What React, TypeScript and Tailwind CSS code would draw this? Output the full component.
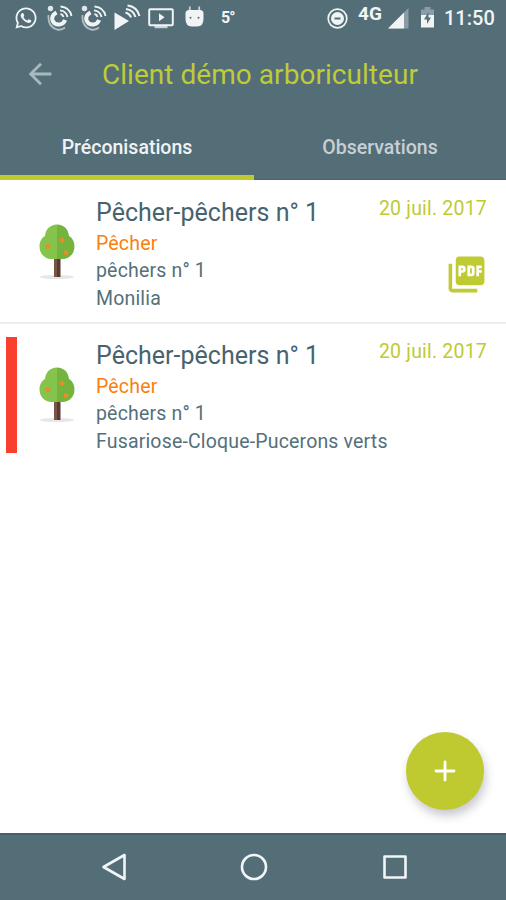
import React from 'react'
import { MdArrowBack, MdPictureAsPdf } from 'react-icons/md'
import { FaWhatsapp } from 'react-icons/fa'

type Item = {
  id: number
  name: string
  species: string
  plot: string
  issues: string
  date: string
  pdf: boolean
  alert: boolean
}

const ITEMS: Item[] = [
  { id: 1, name: 'Pêcher-pêchers n° 1', species: 'Pêcher', plot: 'pêchers n° 1', issues: 'Monilia', date: '20 juil. 2017', pdf: true, alert: false },
  { id: 2, name: 'Pêcher-pêchers n° 1', species: 'Pêcher', plot: 'pêchers n° 1', issues: 'Fusariose-Cloque-Pucerons verts', date: '20 juil. 2017', pdf: false, alert: true },
]

function DishIcon() {
  return (
    <svg width="27" height="27" viewBox="0 0 27 27" className="block">
      <circle cx="4.5" cy="4.5" r="2.7" fill="currentColor" opacity="0.9" />
      <path d="M10.5 8.5Q5 11.5 6.5 16.5Q8.5 21 13.5 20.5Q17.5 20 19.2 16" fill="none" stroke="currentColor" strokeWidth="4" />
      <path d="M2.5 11q-1 11.5 8.5 14.5 4.5 1 8-2" fill="none" stroke="currentColor" strokeWidth="1.8" opacity="0.6" />
      <g fill="none" stroke="currentColor" strokeWidth="1.8">
        <path d="M14.5 10q2.5.5 3 3" />
        <path d="M14 6.3q6.2.5 7.5 6.7" />
        <path d="M14.5 2.5q9.2.8 11 9.5" />
      </g>
    </svg>
  )
}

function CastIcon() {
  return (
    <svg width="27" height="27" viewBox="0 0 27 27" className="block">
      <path d="M.5 8.5l14.500 8.500L.5 26z" fill="currentColor" />
      <g fill="none" stroke="currentColor" strokeWidth="2">
        <path d="M11.5 8.5q4.5 1.5 5.5 5" />
        <path d="M12 5q7.5 1 9.5 8" />
        <path d="M13.5 1.5q9.5 1 12 10.5" />
      </g>
    </svg>
  )
}

function TvIcon() {
  return (
    <svg width="26" height="21" viewBox="0 0 26 21" className="block">
      <rect x="1.2" y="1.2" width="23.6" height="16" rx="1" fill="none" stroke="currentColor" strokeWidth="2" />
      <path d="M11 5.2l5.5 4-5.5 4z" fill="currentColor" />
      <path d="M6.5 17h13v3.2h-13z" fill="currentColor" opacity="0.75" />
    </svg>
  )
}

function AndroidIcon() {
  return (
    <svg width="19" height="21" viewBox="0 0 19 21" className="block">
      <path d="M4.8 .5v5M14.2 .5v5" stroke="currentColor" strokeWidth="1.8" opacity="0.75" />
      <path d="M.5 7.5q0-3.5 3.5-3.5h11q3.5 0 3.5 3.5v5.5q0 7.5-6.5 7.5h-5q-6.5 0-6.5-7.5z" fill="currentColor" />
      <circle cx="5.5" cy="11.8" r="1" className="fill-[#546e78]" />
      <circle cx="13.5" cy="11.8" r="1" className="fill-[#546e78]" />
    </svg>
  )
}

function StatusBar() {
  return (
    <div className="flex h-9 items-center text-[#f1f4f5]">
      <FaWhatsapp className="ml-[14px] size-[24px]" />
      <div className="ml-[8px] pb-[2px]"><DishIcon /></div>
      <div className="ml-[7px] pb-[2px]"><DishIcon /></div>
      <div className="ml-[7px] pb-[1px]"><CastIcon /></div>
      <div className="ml-[7px] pt-[1px]"><TvIcon /></div>
      <div className="ml-[11px] pb-[4px]"><AndroidIcon /></div>
      <span className="ml-[17px] text-[16px] leading-5 font-bold tracking-[-1px]">5°</span>

      <svg width="21" height="21" viewBox="0 0 21 21" className="ml-auto">
        <circle cx="10.5" cy="10.5" r="9.3" fill="none" stroke="currentColor" strokeWidth="1.7" />
        <circle cx="10.5" cy="10.5" r="6.5" fill="currentColor" />
        <path d="M7.5 10.5h6" className="stroke-[#546e78]" strokeWidth="2" />
      </svg>
      <span className="ml-[10px] w-[26px] pb-[9px] text-[19px] leading-5 font-bold">4G</span>
      <svg width="21" height="21" viewBox="0 0 21 21" className="ml-[4px]">
        <path d="M20.5 0v20.5H0z" fill="currentColor" opacity="0.35" />
        <path d="M16 4.5v16H0z" fill="currentColor" />
      </svg>
      <svg width="15" height="22" viewBox="0 0 15 22" className="ml-[11px] mb-[2px]">
        <path d="M4.5 1h6v2.5H14V10H1V3.5h3.5z" fill="currentColor" opacity="0.35" />
        <path d="M1 9h13v12.5H1z" fill="currentColor" />
        <path d="M8.5 6l-4.5 7.5h3V18L11 11.5H8.5z" className="fill-[#546e78]" />
      </svg>
      <span className="ml-[9px] mr-[10px] w-[52px] text-[20px] leading-6 font-medium whitespace-nowrap">11:50</span>
    </div>
  )
}

function TreeIcon() {
  return (
    <svg width="36" height="56" viewBox="0 0 36 56" className="block shrink-0">
      <ellipse cx="18" cy="53" rx="17" ry="2" fill="#e4e6e8" />
      <path d="M15 33h3.2v20H15z" fill="#795548" />
      <path d="M18 33h3.5v20H18z" fill="#5a3a31" />
      <path d="M18 .5C11 .5 6.5 5.5 6 12 2.5 14 .5 18 .5 22.5.5 30 6 35 12.5 35H18z" fill="#84c44c" />
      <path d="M18 .5c7 0 11.5 5 12 11.5 3.5 2 5.5 6 5.5 10.5C35.5 30 30 35 23.5 35H18z" fill="#74b43e" />
      <circle cx="9" cy="22.5" r="2.4" fill="#ee8b22" />
      <circle cx="23" cy="16.3" r="2.4" fill="#ee8b22" />
      <circle cx="27" cy="28.6" r="2.4" fill="#ee8b22" />
    </svg>
  )
}

function Row({ item }: { item: Item }) {
  return (
    <div className="flex h-[143px] border-b-2 border-[#ededee] last:border-transparent">
      <div className={item.alert ? 'mt-[13px] ml-[6px] h-[116px] w-[11px] shrink-0 bg-[#f9402f]' : 'ml-[6px] w-[11px] shrink-0'} />
      <div className="mt-[43px] ml-[22px] shrink-0"><TreeIcon /></div>
      <div className="ml-[21px] mt-[15px] w-0 flex-1 whitespace-nowrap text-[19.5px] leading-[27.3px] tracking-[0.17px] text-[#55707a]">
        <div className="text-[25px] leading-[34px] tracking-[0.02px] text-[#48636e]">{item.name}</div>
        <div className="text-[#f9800f]">{item.species}</div>
        <div>{item.plot}</div>
        <div>{item.issues}</div>
      </div>
      <div className="mr-[19px] mt-[14px] flex w-[108px] shrink-0 flex-col items-end text-[#c0ca33]">
        <span className="whitespace-nowrap text-[19.5px] leading-[27px] tracking-[0.2px]">{item.date}</span>
        {item.pdf && <MdPictureAsPdf className="mt-[31px] mr-[-1px] size-[43px]" />}
      </div>
    </div>
  )
}

export default function App() {
  return (
    <div className="relative flex h-[900px] w-[506px] flex-col overflow-hidden bg-white font-['Roboto',sans-serif]">
      <header className="flex h-[180px] shrink-0 flex-col bg-[#546e78]">
        <StatusBar />
        <div className="flex h-[76px] items-center">
          <MdArrowBack className="ml-[23px] size-[34px] text-[#a8b8c0]" />
          <h1 className="ml-[45px] whitespace-nowrap pt-[2px] text-[28px] tracking-[0.04px] text-[#bfcb38]">Client démo arboriculteur</h1>
        </div>
        <nav className="flex flex-1 text-[19.5px] font-medium">
          <button className="w-[254px] border-b-[5px] border-[#bfca2c] pt-[9px] text-[#f0f3f6]">Préconisations</button>
          <button className="w-[252px] border-b border-[#4a6570] pt-[5px] text-[#c6d0d6]">Observations</button>
        </nav>
      </header>

      <main className="mt-px flex-1">
        {ITEMS.map((item) => <Row key={item.id} item={item} />)}
      </main>

      <button className="absolute left-[406px] top-[732px] flex size-[78px] items-center justify-center rounded-full bg-[#bfca30] shadow-[2px_6px_10px_rgba(70,60,90,0.28)]">
        <svg width="22" height="22" viewBox="0 0 22 22">
          <path d="M11 2v18M2 11h18" stroke="white" strokeWidth="2.8" strokeLinecap="round" />
        </svg>
      </button>

      <footer className="flex h-[67px] shrink-0 items-center border-t-2 border-[#46616d] bg-[#546e78] pb-[2px]">
        <svg width="26" height="30" viewBox="0 0 26 30" className="ml-[101px]">
          <path d="M23.5 3v24L2.5 15z" fill="none" stroke="#f1f5f8" strokeWidth="2.6" strokeLinejoin="round" />
        </svg>
        <svg width="28" height="28" viewBox="0 0 28 28" className="ml-[113px]">
          <circle cx="14" cy="14" r="12" fill="none" stroke="#f1f5f8" strokeWidth="2.6" />
        </svg>
        <svg width="26" height="26" viewBox="0 0 26 26" className="ml-[114px]">
          <rect x="2.5" y="2.5" width="21" height="21" fill="none" stroke="#f1f5f8" strokeWidth="2.6" strokeLinejoin="round" />
        </svg>
      </footer>
    </div>
  )
}
